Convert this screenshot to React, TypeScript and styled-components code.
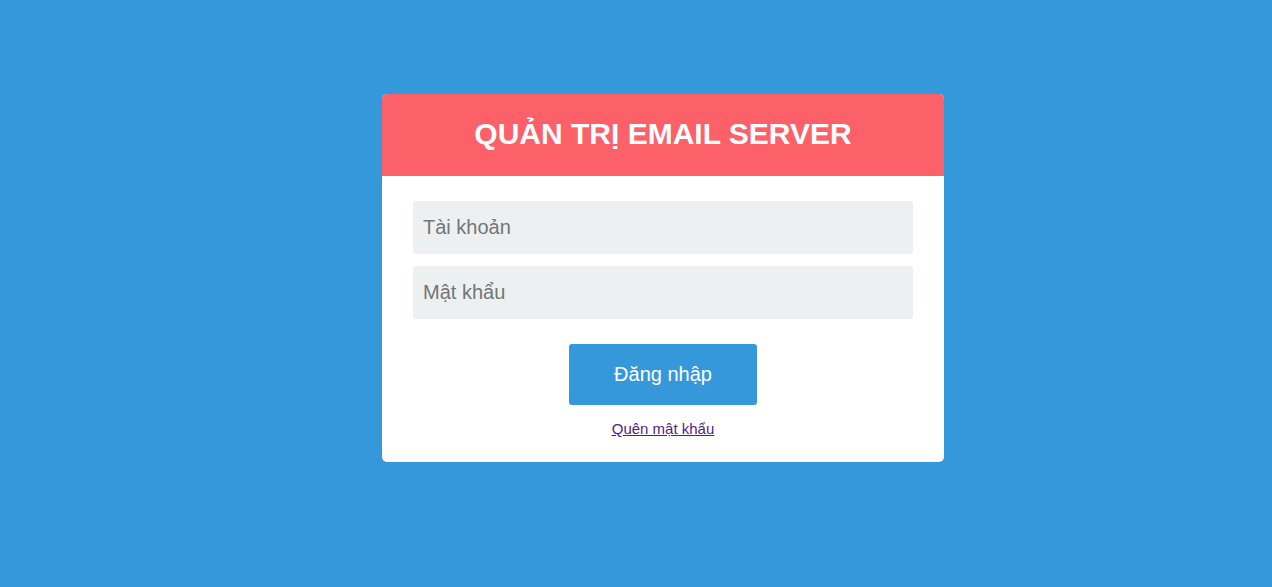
import styled, { createGlobalStyle } from 'styled-components';

const GlobalStyle = createGlobalStyle`
  html, body {
    margin: 0;
    padding: 0;
    background-color: #3598db;
    font-family: Arial, 'Liberation Sans', sans-serif;
  }
`;

const Page = styled.div`
  min-height: 587px;
  box-sizing: border-box;
  padding: 94px 0 0 382px;
  background-color: #3598db;
`;

const Card = styled.div`
  width: 562px;
  background-color: #fff;
  border-radius: 5px;
  overflow: hidden;
`;

const Header = styled.div`
  height: 82px;
  background-color: #fc6068;
  display: flex;
  align-items: center;
  justify-content: center;
`;

const Title = styled.h1`
  margin: 0;
  color: #fff;
  font-size: 30px;
  font-weight: bold;
  padding-bottom: 2px;
`;

const Form = styled.form`
  padding: 25px 31px 25px;
  display: flex;
  flex-direction: column;
  align-items: center;
`;

const Input = styled.input`
  box-sizing: border-box;
  width: 100%;
  height: 53px;
  margin-bottom: 12px;
  padding: 0 10px;
  border: none;
  border-radius: 3px;
  background-color: #ecf0f1;
  font-family: Arial, 'Liberation Sans', sans-serif;
  font-size: 20px;
  color: #333;
  outline: none;

  &::placeholder {
    color: #757575;
  }
`;

const Button = styled.button`
  width: 188px;
  height: 61px;
  margin-top: 13px;
  border: none;
  border-radius: 3px;
  background-color: #3598db;
  color: #fff;
  font-family: Arial, 'Liberation Sans', sans-serif;
  font-size: 20px;
  cursor: pointer;
`;

const ForgotLink = styled.a`
  margin-top: 15px;
  font-size: 15px;
  line-height: 17px;
  color: #551a8b;
  text-decoration: underline;
`;

export default function App() {
  return (
    <>
      <GlobalStyle />
      <Page>
        <Card>
          <Header>
            <Title>QUẢN TRỊ EMAIL SERVER</Title>
          </Header>
          <Form onSubmit={e => e.preventDefault()}>
            <Input type="text" placeholder="Tài khoản" />
            <Input type="password" placeholder="Mật khẩu" />
            <Button type="submit">Đăng nhập</Button>
            <ForgotLink href="#">Quên mật khẩu</ForgotLink>
          </Form>
        </Card>
      </Page>
    </>
  );
}
